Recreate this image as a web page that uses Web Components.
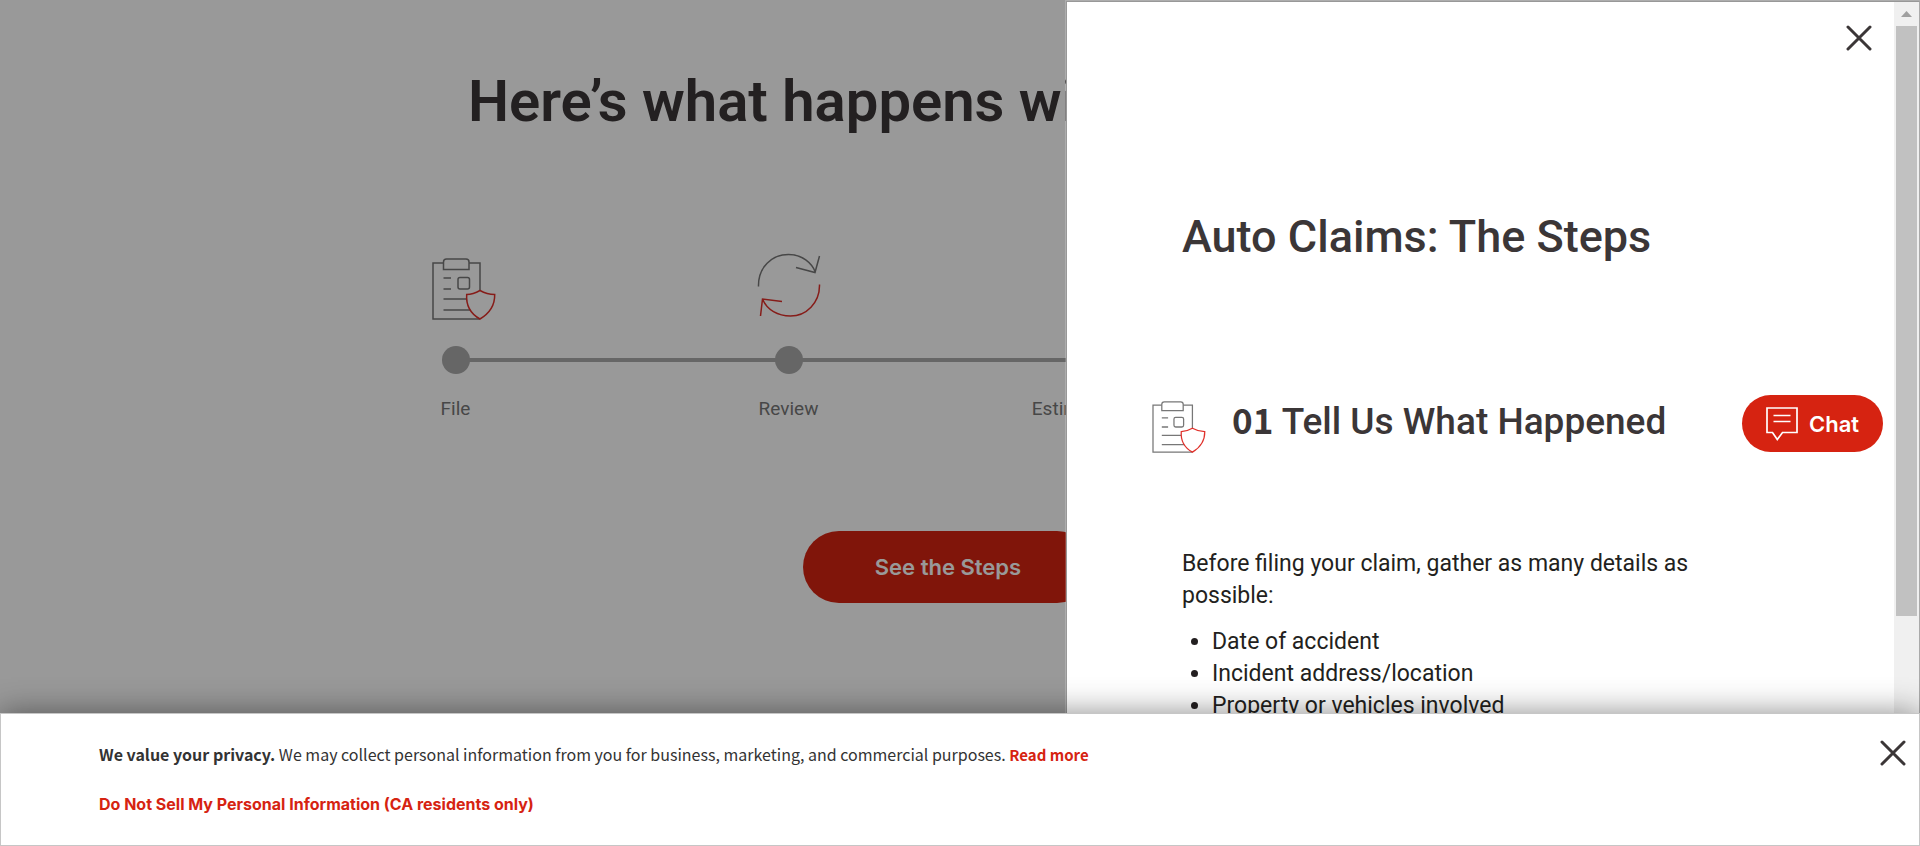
<!DOCTYPE html>
<html lang="en">
<head>
<meta charset="utf-8">
<title>Auto Claims: The Steps</title>
<style>
body { margin: 0; background: #fff; color: #3b3637; font-family: Roboto, "Liberation Sans", sans-serif; }
</style>
</head>
<body>
<claims-page></claims-page>
<script>
const define = (name, html) => customElements.define(name, class extends HTMLElement {
  constructor() {
    super();
    const t = document.createElement('template');
    t.innerHTML = html;
    this.attachShadow({ mode: 'open' }).append(t.content.cloneNode(true));
  }
});

define('icon-clipboard', `
<style>
:host { display: block; }
svg { display: block; width: 100%; height: 100%; }
</style>
<svg viewBox="0 0 64 62" fill="none" stroke="#777" stroke-width="1.5" aria-hidden="true">
  <path d="M11.500 5H1V61H48M37 5H48V33"/>
  <path d="M11.500 11.500V4q0-3 3-3H34q3 0 3 3v7.500z"/>
  <path d="M11.500 20H19M11.500 31H19M11.500 41H35M11.500 52H38"/>
  <rect x="26" y="19.500" width="11.500" height="11.500" rx="2"/>
  <path d="M48 32.500Q41 36.500 34.700 36.500Q33.500 53 48 61Q63 52 62.700 36.500Q55 36.500 48 32.500z" fill="#fff" stroke="#e0302a"/>
</svg>`);

define('icon-review', `
<style>
:host { display: block; }
svg { display: block; width: 100%; height: 100%; }
</style>
<svg viewBox="0 0 64 64" fill="none" stroke="#777" stroke-width="1.5" aria-hidden="true">
  <path d="M1.500 33.500C1 14 15 1.500 31.500 1.500C45 1.500 55 10 58.500 19.500M39 14.500L58 19.500L62.500 3"/>
  <path d="M62.500 31.500C63 50 49 63 33.500 63C21 63 10 57 5.500 46M3.500 63L5.500 46L25 48.500" stroke="#e0302a"/>
</svg>`);

define('close-button', `
<style>
:host { display: block; width: 26px; height: 26px; }
button { display: block; width: 100%; height: 100%; padding: 0; border: 0; background: none; cursor: pointer; }
svg { display: block; width: 100%; height: 100%; }
</style>
<button type="button" aria-label="Close"><svg viewBox="0 0 26 26" stroke="#3b3637" stroke-width="3" stroke-linecap="round"><path d="M2 2L24 24M24 2L2 24"/></svg></button>`);

define('claim-step', `
<style>
:host { display: flex; flex-direction: column; align-items: center; position: relative; }
.icon { width: 80px; height: 67px; display: flex; justify-content: center; align-items: flex-end; }
.dot { width: 28px; height: 28px; margin-top: 26px; border-radius: 50%; background: #aaa; }
.line { position: absolute; top: 105px; left: 50%; right: -50%; height: 4px; background: #aaa; }
:host([last]) .line { display: none; }
.label { margin-top: 23px; font-size: 19px; line-height: 24px; color: #777; white-space: nowrap; }
</style>
<div class="icon"><slot name="icon"></slot></div>
<div class="line"></div><div class="dot"></div>
<div class="label"><slot></slot></div>`);

define('claims-overview', `
<style>
:host { display: block; padding-right: 24px; }
h1 { margin: 0 auto; width: 960px; padding-top: 65px; font-size: 58px; line-height: 72px; font-weight: 600; white-space: nowrap; }
.steps { display: grid; grid-template-columns: repeat(4, 333px); justify-content: center; padding: 116px 0 0 14px; }
icon-clipboard { width: 64px; height: 62px; margin-left: 16px; }
icon-review { width: 64px; height: 64px; margin-bottom: 3px; }
.action { display: flex; justify-content: center; margin-top: 110px; }
button { width: 290px; height: 72px; border: 0; border-radius: 36px; background: #d62311; color: #fff; font: 600 22px/28px Inter, sans-serif; }
</style>
<h1>Here’s what happens with your claim</h1>
<div class="steps">
  <claim-step><icon-clipboard slot="icon"></icon-clipboard>File</claim-step>
  <claim-step><icon-review slot="icon"></icon-review>Review</claim-step>
  <claim-step>Estimate and Repairs</claim-step>
  <claim-step last></claim-step>
</div>
<div class="action"><button type="button">See the Steps</button></div>`);

define('scroll-rail', `
<style>
:host { display: flex; flex-direction: column; align-items: center; width: 25px; background: #f0f0f0; }
svg { display: block; width: 25px; height: 24px; }
.thumb { width: 21px; flex: 0 0 70%; background: #c1c1c1; }
</style>
<svg viewBox="0 0 25 24" aria-hidden="true"><path d="M7 15L12.500 9L18 15z" fill="#a0a0a0"/></svg>
<div class="thumb"></div>`);

define('chat-button', `
<style>
:host { display: block; }
button { display: flex; align-items: center; gap: 11px; width: 141px; height: 57px; padding: 0 0 0 24px; border: 0; border-radius: 29px; background: #d62311; color: #fff; font: 600 22px/28px Inter, sans-serif; }
svg { display: block; width: 32px; height: 34px; }
</style>
<button type="button"><svg viewBox="0 0 32 34" fill="none" stroke="#fff" stroke-width="1.700" aria-hidden="true"><path d="M1 1H31V25.500H16.500L11.300 32.500L6.500 25.500H1zM7.500 8.500H24.500M7.500 14.500H24.500"/></svg><span>Chat</span></button>`);

define('claims-drawer', `
<style>
:host { display: flex; background: #fff; border: 1px solid #989898; border-right-color: #aaa; box-shadow: 0 0 0 1px rgba(255,255,255,.2); overflow: hidden; box-sizing: border-box; }
.content { flex: 1; min-width: 0; padding: 23px 22px 0 85px; }
.top { display: flex; justify-content: flex-end; }
h2 { margin: 159px 0 0 30px; font-size: 45px; line-height: 54px; font-weight: 500; }
.step { display: flex; align-items: center; margin-top: 132px; height: 62px; }
icon-clipboard { width: 54px; height: 52px; }
h3 { margin: 0 0 14px 26px; font-size: 37px; line-height: 44px; font-weight: 500; white-space: nowrap; }
h3 b { font: 700 35px/44px "Noto Sans CJK SC", sans-serif; }
.details { margin: 90px 100px 0 30px; max-width: 560px; font-size: 23px; line-height: 32px; color: #231f20; }
p { margin: 0 0 14px; }
ul { margin: 0; padding-left: 30px; }
</style>
<div class="content">
  <div class="top"><close-button></close-button></div>
  <h2>Auto Claims: The Steps</h2>
  <div class="step"><icon-clipboard></icon-clipboard><h3><b>01</b> Tell Us What Happened</h3></div>
  <div class="details">
    <p>Before filing your claim, gather as many details as possible:</p>
    <ul><li>Date of accident</li><li>Incident address/location</li><li>Property or vehicles involved</li></ul>
  </div>
</div>
<scroll-rail></scroll-rail>`);

define('privacy-banner', `
<style>
:host { display: flex; justify-content: space-between; align-items: flex-start; box-sizing: border-box; padding: 26px 13px 25px 98px; background: #fff; border: 1px solid #c6c6c6; box-shadow: 0 0 30px rgba(0,0,0,.45); font-family: "Noto Sans CJK SC", "Open Sans", sans-serif; font-size: 16px; line-height: 28px; color: #333; }
p { margin: 0 0 19px; }
p:last-child { margin: 0; font: 700 16px/32px Inter, sans-serif; }
b { font-weight: 700; color: #333; }
a { color: #d62311; text-decoration: none; }
.more { font-size: 15px; font-weight: 700; }
</style>
<div>
  <p><b>We value your privacy.</b> We may collect personal information from you for business, marketing, and commercial purposes. <a class="more" href="#privacy">Read more</a></p>
  <p><a href="#do-not-sell">Do Not Sell My Personal Information (CA residents only)</a></p>
</div>
<close-button></close-button>`);

define('claims-page', `
<style>
:host { display: block; position: relative; height: 100vh; overflow: hidden; }
.scrim { position: absolute; inset: 0; background: rgba(0,0,0,.4); }
claims-drawer { position: absolute; top: 1px; right: 0; bottom: 0; width: 854px; max-width: 100%; }
chat-button { position: absolute; right: 37px; bottom: 394px; }
privacy-banner { position: absolute; left: 0; right: 0; bottom: 0; }
</style>
<claims-overview></claims-overview>
<div class="scrim"></div>
<claims-drawer></claims-drawer>
<chat-button></chat-button>
<privacy-banner></privacy-banner>`);
</script>
</body>
</html>
